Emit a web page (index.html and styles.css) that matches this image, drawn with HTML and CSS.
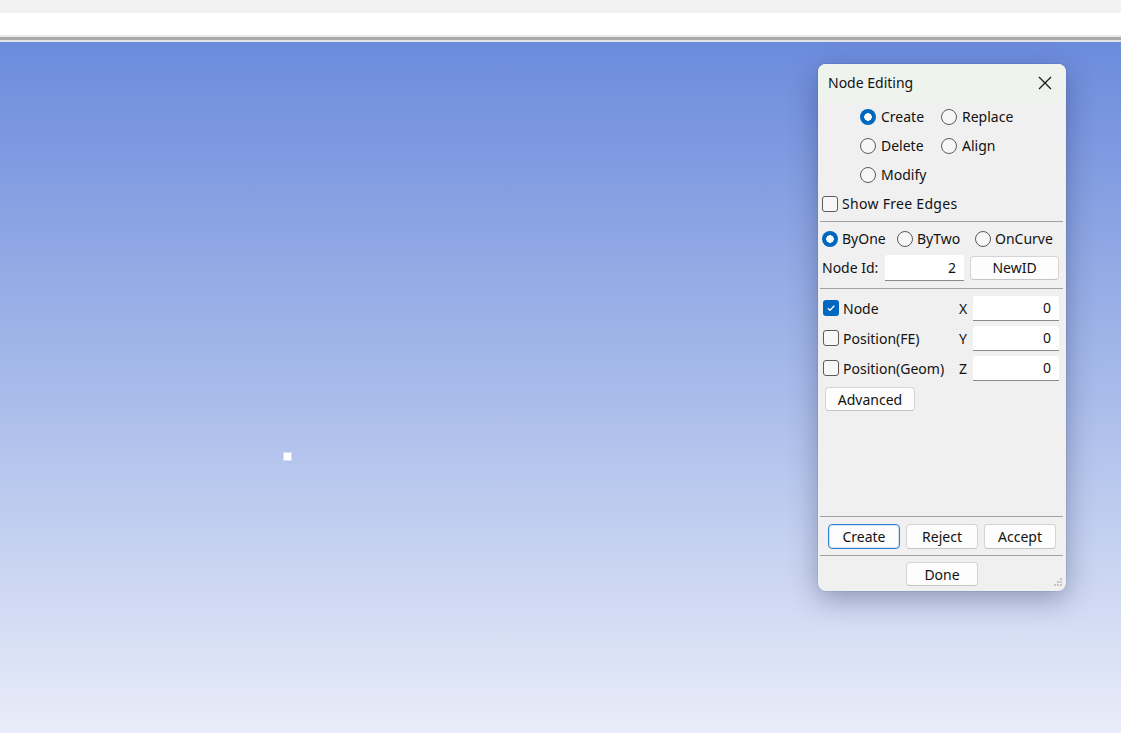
FILE: index.html
```html
<!DOCTYPE html>
<html lang="en">
<head>
<meta charset="utf-8">
<title>Node Editing</title>
<link rel="stylesheet" href="styles.css">
</head>
<body>
<div class="chrome-top"></div>
<div class="chrome-bar"></div>
<div class="chrome-rule"></div>
<main class="viewport">
  <span class="node-dot"></span>
  <section class="dialog">
    <header class="titlebar">
      <span class="title">Node Editing</span>
      <svg class="close" width="14" height="14" viewBox="0 0 14 14"><path d="M1 1 L13 13 M13 1 L1 13" stroke="#1b1b1b" stroke-width="1.3" fill="none"/></svg>
    </header>
    <div class="body">
      <div class="mode-grid">
        <label class="opt"><span class="radio on"></span>Create</label>
        <label class="opt"><span class="radio"></span>Replace</label>
        <label class="opt"><span class="radio"></span>Delete</label>
        <label class="opt"><span class="radio"></span>Align</label>
        <label class="opt"><span class="radio"></span>Modify</label>
      </div>
      <label class="row free-row"><span class="check"></span>Show Free Edges</label>
      <hr class="sep sep-a">
      <div class="row method-row">
        <label class="opt"><span class="radio on"></span>ByOne</label>
        <label class="opt"><span class="radio"></span>ByTwo</label>
        <label class="opt"><span class="radio"></span>OnCurve</label>
      </div>
      <div class="row id-row">
        <span class="lbl">Node Id:</span>
        <span class="field id-field">2</span>
        <button class="btn newid">NewID</button>
      </div>
      <hr class="sep sep-b">
      <div class="coord-row">
        <label class="opt"><span class="check on"><svg width="10" height="10" viewBox="0 0 10 10"><path d="M1.8 5.2 L4 7.3 L8.3 2.8" stroke="#fff" stroke-width="1.3" fill="none"/></svg></span>Node</label>
        <span class="axis">X</span>
        <span class="field">0</span>
      </div>
      <div class="coord-row">
        <label class="opt"><span class="check"></span>Position(FE)</label>
        <span class="axis">Y</span>
        <span class="field">0</span>
      </div>
      <div class="coord-row">
        <label class="opt"><span class="check"></span>Position(Geom)</label>
        <span class="axis">Z</span>
        <span class="field">0</span>
      </div>
      <div class="adv-row"><button class="btn adv">Advanced</button></div>
      <div class="spacer"></div>
      <hr class="sep sep-c">
      <div class="action-row">
        <button class="btn act focus">Create</button>
        <button class="btn act">Reject</button>
        <button class="btn act">Accept</button>
      </div>
      <hr class="sep sep-d">
      <div class="done-row"><button class="btn act">Done</button></div>
      <svg class="grip" width="12" height="12" viewBox="0 0 12 12" fill="#c4c4c4"><rect x="9" y="1" width="2" height="2"/><rect x="6" y="4" width="2" height="2"/><rect x="9" y="4" width="2" height="2"/><rect x="3" y="7" width="2" height="2"/><rect x="6" y="7" width="2" height="2"/><rect x="9" y="7" width="2" height="2"/></svg>
    </div>
  </section>
</main>
</body>
</html>
```
FILE: styles.css
```css
* { box-sizing: border-box; }
html, body { margin: 0; padding: 0; }
body {
  width: 1121px;
  height: 733px;
  overflow: hidden;
  font-family: "Noto Sans", "Open Sans", sans-serif;
  font-size: 14px;
  color: #121212;
  background: #fff;
}
.chrome-top { height: 13px; background: #f2f2f2; }
.chrome-bar { height: 22px; background: #ffffff; }
.chrome-rule {
  height: 7px;
  background: #ebebeb;
  border-top: 2px solid #ebebeb;
  border-bottom: 2px solid #e2e2e2;
  background-image: linear-gradient(#a9a9a9, #a9a9a9);
  background-size: 100% 3px;
  background-repeat: no-repeat;
}
.viewport {
  position: relative;
  height: 691px;
  background: linear-gradient(#6b8bdc 0%, #aabcea 52%, #e9edf9 100%);
}
.node-dot {
  position: absolute;
  left: 284px;
  top: 411px;
  width: 7px;
  height: 7px;
  background: #fff;
  box-shadow: 0 0 0 1px rgba(255,255,255,0.45);
}
.dialog {
  position: absolute;
  left: 818px;
  top: 22px;
  width: 248px;
  height: 527px;
  background: #f0f0f0;
  border-radius: 8px;
  box-shadow: 0 8px 28px rgba(20, 30, 70, 0.35), 0 0 0 1px rgba(0,0,0,0.06);
  display: flex;
  flex-direction: column;
  overflow: hidden;
}
.titlebar {
  height: 37px;
  flex: none;
  background: #eef3ee;
  display: flex;
  align-items: center;
  justify-content: space-between;
  padding: 0 14px 0 10px;
}
.title { font-size: 14px; }
.body {
  flex: 1;
  display: flex;
  flex-direction: column;
  position: relative;
  padding-top: 1px;
}
.opt {
  display: flex;
  align-items: center;
  gap: 5px;
  white-space: nowrap;
}
.radio {
  width: 16px;
  height: 16px;
  border-radius: 50%;
  border: 1px solid #5c5c5c;
  background: #f7f7f7;
  flex: none;
}
.radio.on {
  border: none;
  background: radial-gradient(circle, #fff 0 3.5px, #0067c0 4px);
}
.check {
  width: 16px;
  height: 16px;
  border-radius: 3px;
  border: 1px solid #5c5c5c;
  background: #f7f7f7;
  flex: none;
  display: flex;
  align-items: center;
  justify-content: center;
}
.check.on { border: none; background: #0067c0; }
.mode-grid {
  display: grid;
  grid-template-columns: 81px auto;
  grid-auto-rows: 29px;
  padding-left: 42px;
}
.row { height: 29px; display: flex; align-items: center; }
.free-row { padding-left: 4px; gap: 4px; letter-spacing: 0.3px; }
.sep {
  margin: 0 3px 0 2px;
  border: none;
  height: 1px;
  background: #a3a3a3;
  flex: none;
}
.sep-a { margin-top: 3px; margin-bottom: 2px; }
.method-row {
  display: grid;
  grid-template-columns: 75px 78px auto;
  padding-left: 4px;
}
.method-row .opt { gap: 4px; }
.id-row { padding-left: 4px; }
.lbl { width: 63px; }
.field {
  display: flex;
  align-items: center;
  justify-content: flex-end;
  height: 25px;
  background: #fff;
  border-bottom: 1px solid #8a8a8a;
  border-radius: 3px 3px 0 0;
  padding-right: 8px;
}
.id-field { width: 79px; height: 26px; }
.btn {
  font-family: inherit;
  font-size: 14px;
  color: #121212;
  background: #fdfdfd;
  border: 1px solid #d4d4d4;
  border-bottom-color: #c4c4c4;
  border-radius: 4px;
  padding: 0;
  height: 24px;
}
.newid { width: 89px; margin-left: 6px; }
.sep-b { margin-top: 6px; margin-bottom: 4px; }
.coord-row {
  height: 30px;
  display: flex;
  align-items: center;
  padding-left: 5px;
}
.coord-row .opt { width: 136px; gap: 4px; }
.axis { width: 14px; }
.coord-row .field { width: 86px; }
.adv-row { margin-top: 4px; padding-left: 7px; }
.adv { width: 90px; }
.spacer { flex: 1; }
.sep-c { margin-bottom: 7px; }
.action-row {
  display: flex;
  justify-content: center;
  gap: 6px;
}
.act { width: 72px; height: 25px; }
.focus {
  border: 1px solid #2f7fd0;
  box-shadow: inset 0 0 0 1px #cfe2f6;
}
.sep-d { margin-top: 6px; }
.done-row {
  display: flex;
  justify-content: center;
  margin-top: 6px;
  margin-bottom: 5px;
}
.done-row .act { height: 24px; }
.grip { position: absolute; right: 3px; bottom: 2px; }
```
